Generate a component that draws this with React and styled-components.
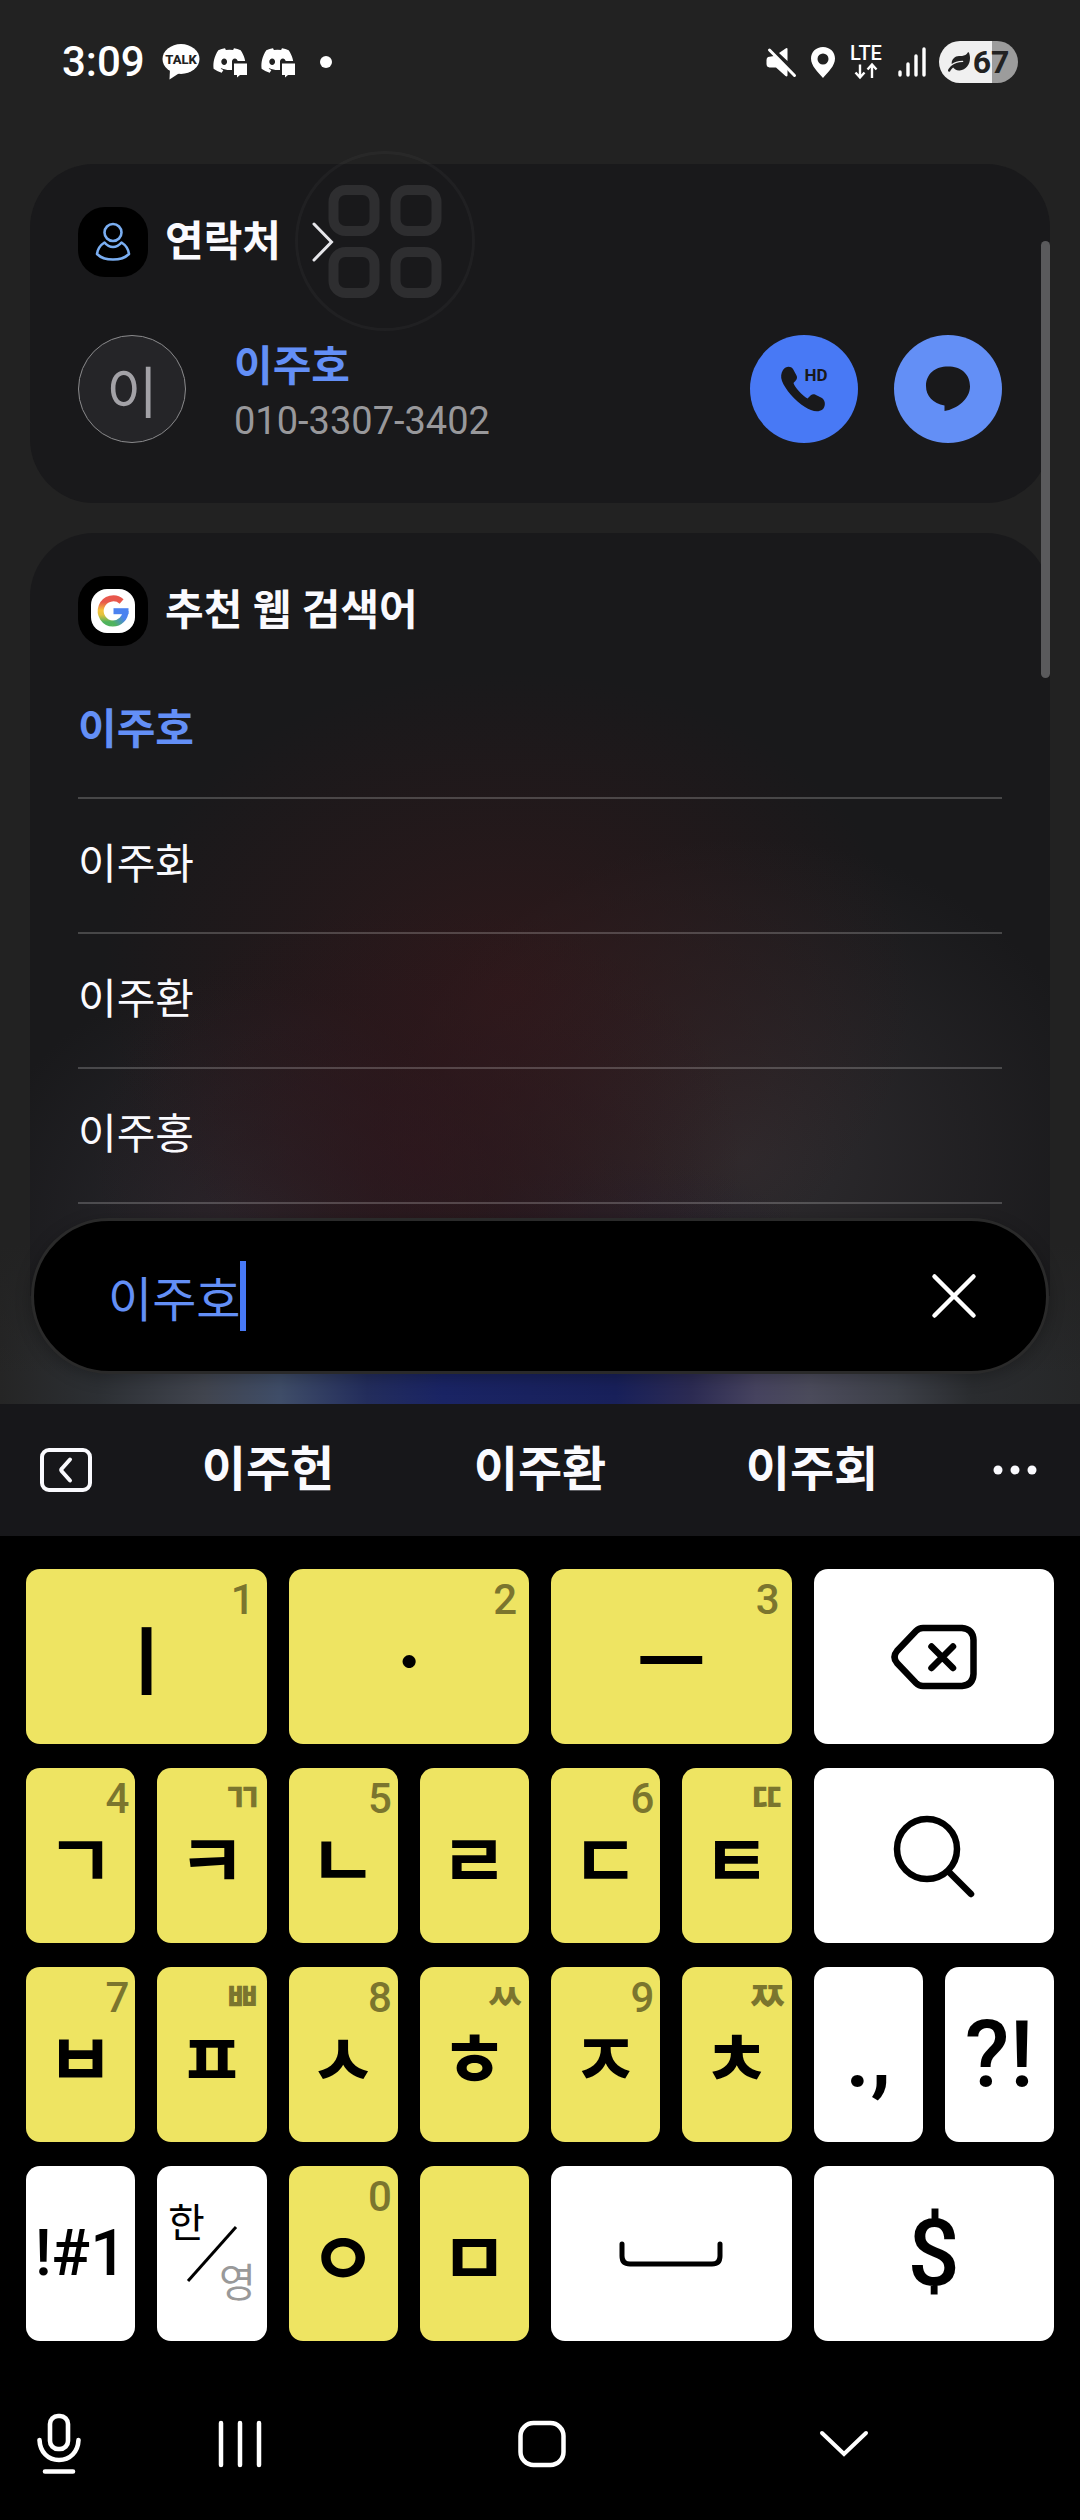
import React, { useState } from "react";
import styled, { createGlobalStyle, css } from "styled-components";
import { FaDiscord, FaLeaf } from "react-icons/fa";

const hangulFont = `"Noto Sans CJK KR", Roboto, sans-serif`;

const GlobalStyle = createGlobalStyle`
	* {
		box-sizing: border-box;
	}
	body {
		margin: 0;
		background: #000;
		font-family: Roboto, "Noto Sans CJK KR", sans-serif;
		color: #fafafe;
	}
	button {
		font-family: inherit;
		color: inherit;
		border: none;
		padding: 0;
		background: none;
		cursor: pointer;
	}
	h2, ul, p {
		margin: 0;
		padding: 0;
	}
	svg {
		display: block;
		overflow: visible;
	}
`;

const Screen = styled.div`
	display: flex;
	flex-direction: column;
	min-height: 100vh;
`;

/* ---------- search results ---------- */

const Wallpaper = styled.main`
	position: relative;
	padding: 0 30px 30px;
	background:
		linear-gradient(to bottom, #222222 0%, rgba(34, 34, 34, 0) 100%) 0 calc(100% - 30px) / 100% 130px no-repeat,
		linear-gradient(
				to right,
				#252525 0%,
				#2c2f33 9%,
				#41454f 19%,
				#3f4d68 26%,
				#232d5c 34%,
				#1a2464 41%,
				#18205a 57%,
				#2c2b53 64%,
				#46435f 70%,
				#4b4b5b 75%,
				#3d4048 83%,
				#2a2c2f 90%,
				#262728 100%
			)
			0 100% / 100% 160px no-repeat,
		#222222;
`;
const StatusBar = styled.header`
	display: flex;
	align-items: center;
	justify-content: space-between;
	height: 124px;
	margin-bottom: 40px;
	padding: 0 32px;
	color: #fff;
`;
const StatusGroup = styled.div`
	display: flex;
	align-items: center;
	gap: ${({ $gap }) => $gap}px;
`;
const Clock = styled.time`
	margin-right: 5px;
	font-size: 42px;
	line-height: 48px;
	font-weight: 500;
`;
const MoreDot = styled.span`
	width: 12px;
	height: 12px;
	margin-left: 12px;
	border-radius: 50%;
	background: #fff;
`;
const Battery = styled.div`
	display: flex;
	align-items: center;
	justify-content: center;
	gap: 3px;
	width: 79px;
	height: 42px;
	border-radius: 21px;
	background: linear-gradient(to right, #f0f0f0 67%, #9c9c9c 67%);
	color: #222;
	font-size: 32px;
	line-height: 42px;
	font-weight: 700;
`;
const Card = styled.section`
	padding: 43px 48px 60px;
	border-radius: 64px;
	background: #19191b;
	& + & {
		margin-top: 30px;
	}
	${({ $open }) =>
		$open &&
		css`
			padding-bottom: 92px;
			border-radius: 64px 64px 0 0;
			background:
				radial-gradient(ellipse 32% 34% at 38% 82%, rgba(48, 21, 28, 0.65), transparent),
				radial-gradient(ellipse 40% 42% at 47% 60%, rgba(54, 24, 26, 0.7), transparent),
				radial-gradient(ellipse 20% 18% at 59% 100%, rgba(33, 31, 56, 0.6), transparent),
				radial-gradient(ellipse 36% 42% at 70% 82%, rgba(58, 54, 58, 0.65), transparent),
				radial-gradient(ellipse 26% 34% at 20% 92%, rgba(52, 50, 58, 0.6), transparent),
				#19191b;
		`}
`;
const CardHeader = styled.div`
	display: flex;
	align-items: center;
	gap: 17px;
`;
const AppIcon = styled.span`
	display: flex;
	align-items: center;
	justify-content: center;
	width: 70px;
	height: 70px;
	border-radius: 27px;
	background: #000;
`;
const GoogleTile = styled.span`
	display: flex;
	align-items: center;
	justify-content: center;
	width: 44px;
	height: 44px;
	border-radius: 16px;
	background: #fff;
`;
const CardTitle = styled.h2`
	font-size: 42px;
	line-height: 60px;
	font-weight: 700;
`;
const OpenButton = styled.button`
	margin-left: 14px;
`;
const Contact = styled.div`
	display: flex;
	align-items: center;
	margin-top: 58px;
`;
const Avatar = styled.span`
	display: flex;
	align-items: center;
	justify-content: center;
	width: 108px;
	height: 108px;
	border: 1px solid #8a8a8c;
	border-radius: 50%;
	background: #252528;
	color: #a3a2a7;
	font-family: ${hangulFont};
	font-size: 56px;
	line-height: 60px;
`;
const ContactText = styled.div`
	flex: 1;
	margin-left: 48px;
`;
const ContactName = styled.p`
	color: #638ff6;
	font-size: 42px;
	line-height: 64px;
	font-weight: 700;
`;
const ContactPhone = styled.p`
	color: #98989b;
	font-size: 38px;
	line-height: 44px;
`;
const RoundButton = styled.button`
	display: flex;
	align-items: center;
	justify-content: center;
	width: 108px;
	height: 108px;
	border-radius: 50%;
	background: ${({ $color }) => $color};
	& + & {
		margin-left: 36px;
	}
`;
const Suggestions = styled.ul`
	margin-top: 18px;
	list-style: none;
	li {
		border-bottom: 2px solid rgba(255, 255, 255, 0.2);
	}
`;
const Suggestion = styled.a`
	display: block;
	padding: 36px 0 37px;
	color: ${({ $match }) => ($match ? "#638ff6" : "#fafafe")};
	font-size: 42px;
	line-height: 60px;
	font-weight: ${({ $match }) => ($match ? 700 : 400)};
	text-decoration: none;
`;
const SearchBar = styled.form`
	position: relative;
	display: flex;
	align-items: center;
	justify-content: space-between;
	height: 156px;
	margin: -78px 1px 0;
	padding: 0 69px 0 74px;
	border: 3px solid #2a2a2a;
	border-radius: 78px;
	background: #000;
	box-shadow: 0 4px 16px rgba(0, 0, 0, 0.25);
`;
const Field = styled.label`
	display: flex;
	align-items: center;
`;
const SearchInput = styled.input`
	/* hangul is 0.92em wide, so the box ends where the caret stands */
	width: ${({ $chars }) => `calc(${$chars} * 0.92em)`};
	height: 70px;
	padding: 0;
	border: none;
	outline: none;
	background: none;
	color: #638ff6;
	font-family: ${hangulFont};
	font-size: 48px;
	line-height: 70px;
	caret-color: transparent;
`;
const Caret = styled.span`
	width: 6px;
	height: 70px;
	background: #4879f5;
`;
const Scrollbar = styled.span`
	position: absolute;
	top: 241px;
	right: 30px;
	width: 9px;
	height: 437px;
	border-radius: 5px;
	background: #5a5a5c;
`;
const AssistButton = styled.button`
	position: absolute;
	top: 151px;
	left: 295px;
	width: 180px;
	height: 180px;
	border: 3px solid rgba(255, 255, 255, 0.03);
	border-radius: 50%;
	display: flex;
	align-items: center;
	justify-content: center;
`;

/* ---------- keyboard ---------- */

const Toolbar = styled.div`
	display: grid;
	grid-template-columns: 132px 1fr 1fr 1fr 132px;
	height: 132px;
	background: #17171a;
	font-size: 48px;
	line-height: 60px;
	button {
		display: flex;
		align-items: center;
		justify-content: center;
		font-size: inherit;
		line-height: inherit;
		font-weight: 700;
	}
`;
const Keys = styled.div`
	display: grid;
	grid-template-columns: repeat(8, 1fr);
	grid-auto-rows: 175px;
	gap: 24px 22px;
	padding: 33px 26px 0;
`;
const Key = styled.button`
	position: relative;
	display: flex;
	align-items: center;
	justify-content: center;
	grid-column: span ${({ $wide }) => ($wide ? 2 : 1)};
	border-radius: 14px;
	background: ${({ $white }) => ($white ? "#fff" : "#eee462")};
	&& {
		color: #000;
		font-family: ${({ $white }) => !$white && hangulFont};
	}
	font-size: ${({ $size }) => $size || 74}px;
	line-height: 80px;
	font-weight: ${({ $white }) => ($white ? 500 : 700)};
`;
const Hint = styled.span`
	position: absolute;
	top: 8px;
	right: ${({ $wide }) => ($wide ? 12 : 6)}px;
	color: #7b752e;
	font-family: Roboto, "Noto Sans CJK KR", sans-serif;
	font-size: ${({ $jamo }) => ($jamo ? 40 : 42)}px;
	line-height: 46px;
	font-weight: ${({ $jamo }) => ($jamo ? 700 : 500)};
`;
const LanguageFace = styled.span`
	display: grid;
	width: 88px;
	height: 108px;
	font-size: 40px;
	line-height: 48px;
	font-weight: 400;
	& > * {
		grid-area: 1 / 1;
		place-self: center;
	}
	& > :first-child {
		place-self: start;
	}
	& > :last-child {
		place-self: end;
		color: #999;
	}
`;
const NavBar = styled.nav`
	display: grid;
	grid-template-columns: 60px 1fr 1fr 1fr;
	padding: 63px 85px 30px 29px;
	button {
		display: flex;
		align-items: center;
		justify-content: center;
		height: 80px;
	}
`;

const TalkIcon = () => (
	<svg width="38" height="36" viewBox="0 0 38 36">
		<ellipse cx="19" cy="15" rx="18.5" ry="15" fill="#fff" />
		<path d="M8 25 L7.500 35.500 L19 28 Z" fill="#fff" />
		<text x="19" y="20" textAnchor="middle" fontSize="13" fontWeight="800" fill="#222">
			TALK
		</text>
	</svg>
);

const DiscordIcon = () => (
	<svg width="36" height="32" viewBox="0 0 36 32">
		<FaDiscord x="0" y="-3" size={35} color="#fff" />
		<path d="M20 15 H36 V32 H20 Z" fill="#222" />
		<path d="M22 17.500 H35 V29 H28 L25 31.500 V29 H22 Z" fill="#fff" />
	</svg>
);

const MuteIcon = () => (
	<svg width="31" height="31" viewBox="0 0 31 31" fill="#fff">
		<path d="M13 6 L20 1.200 Q21.500 0.500 21.500 2 V14 Z" />
		<path d="M2 10 L8 9 L21.500 22.500 V28.500 Q21 30 19.500 29 L10 20.500 H3.500 Q0.500 20 0.500 17 V13 Q0.500 11 2 10 Z" />
		<path d="M3.500 3 L28.500 28.500" stroke="#fff" strokeWidth="3" strokeLinecap="round" />
	</svg>
);

const PinIcon = () => (
	<svg width="24" height="31" viewBox="0 0 24 31">
		<path
			fillRule="evenodd"
			fill="#fff"
			d="M12 0 C5 0 0 5 0 11.500 C0 19 7 25 12 31 C17 25 24 19 24 11.500 C24 5 19 0 12 0 Z M12 6.500 a5.500 5.500 0 1 1 0 11 a5.500 5.500 0 1 1 0 -11 Z"
		/>
	</svg>
);

const LteIcon = () => (
	<svg width="34" height="40" viewBox="0 0 34 40">
		<text x="17" y="18" textAnchor="middle" fontSize="20" fontWeight="500" fill="#fff">
			LTE
		</text>
		<path
			d="M11 22.500 V35 M6.500 30.500 L11 35.500 L15.500 30.500 M23 36 V23 M18.500 27.500 L23 22.500 L27.500 27.500"
			fill="none"
			stroke="#fff"
			strokeWidth="2.4"
		/>
	</svg>
);

const SignalIcon = () => (
	<svg width="28" height="30" viewBox="0 0 28 30" stroke="#fff" strokeWidth="3.4" strokeLinecap="round">
		<path d="M3 25 V28 M11 17 V28 M19 9 V28 M27 2 V28" />
	</svg>
);

const PersonIcon = () => (
	<svg width="36" height="40" viewBox="0 0 36 40" fill="none" stroke="#7aaef2" strokeWidth="2.600">
		<circle cx="18" cy="10.500" r="8.500" />
		<path
			strokeLinejoin="round"
			d="M9.500 20.500 C5.500 23 2.500 28 2 32 C6 36 12 37.500 18 37.500 C24 37.500 30 36 34 32 C33.500 28 30.500 23 26.500 20.500 C24 23.500 21 25 18 25 C15 25 12 23.500 9.500 20.500 Z"
		/>
	</svg>
);

const GoogleIcon = () => (
	<svg width="32" height="32" viewBox="0 0 32 32" fill="none" strokeWidth="6">
		<defs>
			<linearGradient id="g-left" gradientUnits="userSpaceOnUse" x1="0" y1="0" x2="0" y2="32">
				<stop offset="0.22" stopColor="#e8574c" />
				<stop offset="0.48" stopColor="#f5c33b" />
				<stop offset="0.62" stopColor="#e3c23c" />
				<stop offset="0.84" stopColor="#4fb35d" />
			</linearGradient>
			<linearGradient id="g-right" gradientUnits="userSpaceOnUse" x1="16" y1="30" x2="29" y2="20">
				<stop offset="0.1" stopColor="#4fb35d" />
				<stop offset="0.8" stopColor="#4b82f0" />
			</linearGradient>
		</defs>
		<path d="M24.600 6.500 A12.600 12.600 0 1 0 16 28.600" stroke="url(#g-left)" />
		<path d="M15.800 28.600 A12.600 12.600 0 0 0 28.500 16" stroke="url(#g-right)" />
		<path d="M16.500 16.200 H31.500" stroke="#4b82f0" />
	</svg>
);

const ChevronRight = () => (
	<svg width="22" height="40" viewBox="0 0 22 40">
		<path d="M2 2 L19.500 20 L2 38" fill="none" stroke="#e6e6ea" strokeWidth="3" strokeLinecap="round" />
	</svg>
);

const CallIcon = () => (
	<svg width="48" height="48" viewBox="0 0 48 48">
		<path
			fill="#19191b"
			d="M3 5 C6 0.500 11 1 13 4 L16.500 10.500 C18 13.500 16 15.500 13.500 18 C14.500 22 22.500 31 27.500 33.500 C30 31 32 28.500 35 29.500 L42 33 C46 36 45.500 42 42.500 44.500 C38 48 31 46 25 42 C15 36 5 24 2 16 C0.500 12 1 8 3 5 Z"
		/>
		<text x="36" y="15.500" textAnchor="middle" fontSize="17" fontWeight="700" fill="#19191b">
			HD
		</text>
	</svg>
);

const MessageIcon = () => (
	<svg width="46" height="46" viewBox="0 0 46 46">
		<path
			fill="#19191b"
			d="M23 0.500 C36 0.500 45 8 45 20.500 C45 33 32 43 19.500 45 V39.500 C8 37.500 1 30 1 20 C1 8 10 0.500 23 0.500 Z"
		/>
	</svg>
);

const CloseIcon = () => (
	<svg width="46" height="46" viewBox="0 0 46 46">
		<path d="M3.500 3.500 L42.500 42.500 M42.500 3.500 L3.500 42.500" stroke="#fff" strokeWidth="4.500" strokeLinecap="round" />
	</svg>
);

const AssistIcon = () => (
	<svg width="114" height="114" viewBox="0 0 114 114" fill="none" stroke="#2e2e30" strokeWidth="10">
		<rect x="5.500" y="6" width="41" height="41" rx="12" />
		<rect x="67.500" y="6" width="41" height="41" rx="12" />
		<rect x="5.500" y="68" width="41" height="41" rx="12" />
		<rect x="67.500" y="68" width="41" height="41" rx="12" />
	</svg>
);

const CollapseIcon = () => (
	<svg width="52" height="44" viewBox="0 0 52 44" fill="none" stroke="#fafafe" strokeWidth="4">
		<rect x="2" y="2" width="48" height="40" rx="7" />
		<path d="M30 11.500 L22 20.500 Q20.500 22 22 23.500 L30 32.500" strokeLinecap="round" />
	</svg>
);

const DotsIcon = () => (
	<svg width="44" height="10" viewBox="0 0 44 10" fill="#fafafe">
		<circle cx="6" cy="5" r="4.500" />
		<circle cx="23" cy="5" r="4.500" />
		<circle cx="40" cy="5" r="4.500" />
	</svg>
);

const BackspaceIcon = () => (
	<svg width="86" height="66" viewBox="0 0 86 66" fill="none" stroke="#000" strokeWidth="6.500" strokeLinecap="round">
		<path d="M32 4 H71 Q82 5 82.500 16 V50 Q82 61 71 62 H32 Q28 62 25 59 L6 39 Q1 33 6 27 L25 7 Q28 4 32 4 Z" />
		<path d="M40.500 22.500 L62 44 M62 22.500 L40.500 44" />
	</svg>
);

const SearchIcon = () => (
	<svg width="84" height="84" viewBox="0 0 84 84" fill="none" stroke="#000" strokeWidth="6.500" strokeLinecap="round">
		<circle cx="35" cy="35" r="30" />
		<path d="M57 58 L79 80" />
	</svg>
);

const SpaceIcon = () => (
	<svg width="104" height="26" viewBox="0 0 104 26" fill="none" stroke="#000" strokeWidth="5" strokeLinecap="round">
		<path d="M3 3 V15 Q3 23 11 23 H93 Q101 23 101 15 V3" />
	</svg>
);

const SlashIcon = () => (
	<svg width="50" height="56" viewBox="0 0 50 56">
		<path d="M1 55 L49 1" stroke="#000" strokeWidth="3" />
	</svg>
);

const MicIcon = () => (
	<svg width="46" height="62" viewBox="0 0 46 62" fill="none" stroke="#fff" strokeWidth="4.600" strokeLinecap="round">
		<rect x="14" y="3" width="18" height="33" rx="8" />
		<path d="M3.500 27 C4 39 12 47 23 47 C34 47 42 39 42.500 27 M9 58.500 H37" />
	</svg>
);

const RecentsIcon = () => (
	<svg width="44" height="48" viewBox="0 0 44 48" stroke="#fff" strokeWidth="4.500" strokeLinecap="round">
		<path d="M3 3 V45 M22 3 V45 M41 3 V45" />
	</svg>
);

const HomeIcon = () => (
	<svg width="48" height="48" viewBox="0 0 48 48" fill="none" stroke="#fff" strokeWidth="4.500">
		<rect x="2.500" y="3" width="43" height="42" rx="13" />
	</svg>
);

const HideIcon = () => (
	<svg width="50" height="28" viewBox="0 0 50 28" fill="none" stroke="#fff" strokeWidth="4" strokeLinecap="round">
		<path d="M3 3 L25 24 L47 3" />
	</svg>
);

const suggestions = ["이주호", "이주화", "이주환", "이주홍"];
const candidates = ["이주헌", "이주환", "이주회"];

const keys = [
	{ label: "ㅣ", hint: "1", wide: true },
	{ label: "ㆍ", hint: "2", wide: true },
	{ label: "ㅡ", hint: "3", wide: true },
	{ icon: <BackspaceIcon />, name: "지우기", wide: true, white: true },
	{ label: "ㄱ", hint: "4" },
	{ label: "ㅋ", hint: "ㄲ" },
	{ label: "ㄴ", hint: "5" },
	{ label: "ㄹ" },
	{ label: "ㄷ", hint: "6" },
	{ label: "ㅌ", hint: "ㄸ" },
	{ icon: <SearchIcon />, name: "검색", wide: true, white: true },
	{ label: "ㅂ", hint: "7" },
	{ label: "ㅍ", hint: "ㅃ" },
	{ label: "ㅅ", hint: "8" },
	{ label: "ㅎ", hint: "ㅆ" },
	{ label: "ㅈ", hint: "9" },
	{ label: "ㅊ", hint: "ㅉ" },
	{ label: ".,", white: true, size: 92 },
	{ label: "?!", white: true, size: 92 },
	{ label: "!#1", white: true, size: 64 },
	{
		icon: (
			<LanguageFace>
				<span>한</span>
				<SlashIcon />
				<span>영</span>
			</LanguageFace>
		),
		name: "한영 전환",
		white: true,
	},
	{ label: "ㅇ", hint: "0" },
	{ label: "ㅁ" },
	{ icon: <SpaceIcon />, name: "스페이스", wide: true, white: true },
	{ label: "$", wide: true, white: true, size: 92 },
];

const App = () => {
	const [query, setQuery] = useState("이주호");

	return (
		<Screen>
			<GlobalStyle />
			<Wallpaper>
				<StatusBar>
					<StatusGroup $gap={12}>
						<Clock>3:09</Clock>
						<TalkIcon />
						<DiscordIcon />
						<DiscordIcon />
						<MoreDot />
					</StatusGroup>
					<StatusGroup $gap={14}>
						<MuteIcon />
						<PinIcon />
						<LteIcon />
						<SignalIcon />
						<Battery>
							<FaLeaf size={22} />
							67
						</Battery>
					</StatusGroup>
				</StatusBar>

				<Card>
					<CardHeader>
						<AppIcon>
							<PersonIcon />
						</AppIcon>
						<CardTitle>연락처</CardTitle>
						<OpenButton aria-label="연락처 열기">
							<ChevronRight />
						</OpenButton>
					</CardHeader>
					<Contact>
						<Avatar>이</Avatar>
						<ContactText>
							<ContactName>이주호</ContactName>
							<ContactPhone>010-3307-3402</ContactPhone>
						</ContactText>
						<RoundButton $color="#4879f5" aria-label="전화">
							<CallIcon />
						</RoundButton>
						<RoundButton $color="#638ff6" aria-label="메시지">
							<MessageIcon />
						</RoundButton>
					</Contact>
				</Card>

				<Card $open>
					<CardHeader>
						<AppIcon>
							<GoogleTile>
								<GoogleIcon />
							</GoogleTile>
						</AppIcon>
						<CardTitle>추천 웹 검색어</CardTitle>
					</CardHeader>
					<Suggestions>
						{suggestions.map((word) => (
							<li key={word}>
								<Suggestion href="#" $match={word === query}>
									{word}
								</Suggestion>
							</li>
						))}
					</Suggestions>
				</Card>

				<SearchBar onSubmit={(e) => e.preventDefault()}>
					<Field>
						<SearchInput
							aria-label="검색"
							value={query}
							$chars={query.length}
							onChange={(e) => setQuery(e.target.value)}
						/>
						<Caret />
					</Field>
					<button type="button" aria-label="검색어 삭제" onClick={() => setQuery("")}>
						<CloseIcon />
					</button>
				</SearchBar>

				<Scrollbar />
				<AssistButton aria-label="보조 메뉴">
					<AssistIcon />
				</AssistButton>
			</Wallpaper>

			<Toolbar>
				<button aria-label="접기">
					<CollapseIcon />
				</button>
				{candidates.map((word) => (
					<button key={word} onClick={() => setQuery(word)}>
						{word}
					</button>
				))}
				<button aria-label="더보기">
					<DotsIcon />
				</button>
			</Toolbar>

			<Keys>
				{keys.map(({ label, icon, name, hint, wide, white, size }) => (
					<Key key={label || name} aria-label={name} $wide={wide} $white={white} $size={size}>
						{icon || label}
						{hint && (
							<Hint $wide={wide} $jamo={hint > "9"}>
								{hint}
							</Hint>
						)}
					</Key>
				))}
			</Keys>

			<NavBar>
				<button aria-label="음성 입력">
					<MicIcon />
				</button>
				<button aria-label="최근 앱">
					<RecentsIcon />
				</button>
				<button aria-label="홈">
					<HomeIcon />
				</button>
				<button aria-label="키보드 숨기기">
					<HideIcon />
				</button>
			</NavBar>
		</Screen>
	);
};

export default App;
